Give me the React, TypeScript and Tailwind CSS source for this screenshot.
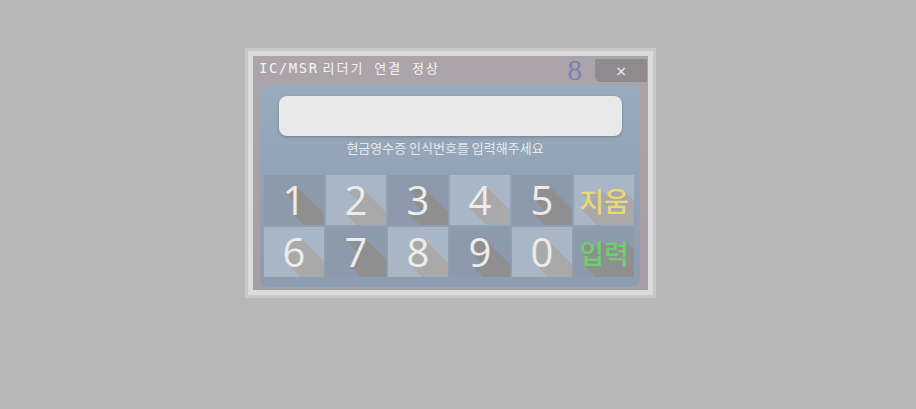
import React from "react";

const keys: { label: string; tone: "dark" | "light"; color: "white" | "yellow" | "green" }[] = [
  { label: "1", tone: "dark", color: "white" },
  { label: "2", tone: "light", color: "white" },
  { label: "3", tone: "dark", color: "white" },
  { label: "4", tone: "light", color: "white" },
  { label: "5", tone: "dark", color: "white" },
  { label: "지움", tone: "light", color: "yellow" },
  { label: "6", tone: "light", color: "white" },
  { label: "7", tone: "dark", color: "white" },
  { label: "8", tone: "light", color: "white" },
  { label: "9", tone: "dark", color: "white" },
  { label: "0", tone: "light", color: "white" },
  { label: "입력", tone: "dark", color: "green" },
];

const darkShadow =
  "[text-shadow:1px_1px_0_#8f8f8f,2px_2px_0_#8f8f8f,3px_3px_0_#8f8f8f,4px_4px_0_#8f8f8f,5px_5px_0_#8f8f8f,6px_6px_0_#8f8f8f,7px_7px_0_#8f8f8f,8px_8px_0_#8f8f8f,9px_9px_0_#8f8f8f,10px_10px_0_#8f8f8f,11px_11px_0_#8f8f8f,12px_12px_0_#8f8f8f,13px_13px_0_#8f8f8f,14px_14px_0_#8f8f8f,15px_15px_0_#8f8f8f,16px_16px_0_#8f8f8f,17px_17px_0_#8f8f8f,18px_18px_0_#8f8f8f,19px_19px_0_#8f8f8f,20px_20px_0_#8f8f8f,21px_21px_0_#8f8f8f,22px_22px_0_#8f8f8f,23px_23px_0_#8f8f8f,24px_24px_0_#8f8f8f,25px_25px_0_#8f8f8f,26px_26px_0_#8f8f8f,27px_27px_0_#8f8f8f,28px_28px_0_#8f8f8f,29px_29px_0_#8f8f8f,30px_30px_0_#8f8f8f,31px_31px_0_#8f8f8f,32px_32px_0_#8f8f8f,33px_33px_0_#8f8f8f,34px_34px_0_#8f8f8f,35px_35px_0_#8f8f8f,36px_36px_0_#8f8f8f,37px_37px_0_#8f8f8f,38px_38px_0_#8f8f8f,39px_39px_0_#8f8f8f,40px_40px_0_#8f8f8f]";
const lightShadow =
  "[text-shadow:1px_1px_0_#a9a9a9,2px_2px_0_#a9a9a9,3px_3px_0_#a9a9a9,4px_4px_0_#a9a9a9,5px_5px_0_#a9a9a9,6px_6px_0_#a9a9a9,7px_7px_0_#a9a9a9,8px_8px_0_#a9a9a9,9px_9px_0_#a9a9a9,10px_10px_0_#a9a9a9,11px_11px_0_#a9a9a9,12px_12px_0_#a9a9a9,13px_13px_0_#a9a9a9,14px_14px_0_#a9a9a9,15px_15px_0_#a9a9a9,16px_16px_0_#a9a9a9,17px_17px_0_#a9a9a9,18px_18px_0_#a9a9a9,19px_19px_0_#a9a9a9,20px_20px_0_#a9a9a9,21px_21px_0_#a9a9a9,22px_22px_0_#a9a9a9,23px_23px_0_#a9a9a9,24px_24px_0_#a9a9a9,25px_25px_0_#a9a9a9,26px_26px_0_#a9a9a9,27px_27px_0_#a9a9a9,28px_28px_0_#a9a9a9,29px_29px_0_#a9a9a9,30px_30px_0_#a9a9a9,31px_31px_0_#a9a9a9,32px_32px_0_#a9a9a9,33px_33px_0_#a9a9a9,34px_34px_0_#a9a9a9,35px_35px_0_#a9a9a9,36px_36px_0_#a9a9a9,37px_37px_0_#a9a9a9,38px_38px_0_#a9a9a9,39px_39px_0_#a9a9a9,40px_40px_0_#a9a9a9]";

function Key({ k }: { k: (typeof keys)[number] }) {
  const bg = k.tone === "dark" ? "bg-[#8d9aab]" : "bg-[#a9b6c6]";
  const shadow = k.tone === "dark" ? darkShadow : lightShadow;
  const isWord = k.label.length > 1;
  const color =
    k.color === "yellow" ? "text-[#e8d877]" : k.color === "green" ? "text-[#6fcf6f]" : "text-[#ececec]";
  return (
    <div className={`${bg} h-[50px] overflow-hidden flex items-center justify-center`}>
      <span
        className={`${color} ${shadow} ${
          isWord
            ? "text-[27px] font-medium font-['Noto_Sans_CJK_KR',sans-serif] leading-none"
            : "text-[40px] font-['Open_Sans',sans-serif] leading-none"
        }`}
      >
        {k.label}
      </span>
    </div>
  );
}

export default function App() {
  return (
    <div className="w-[916px] h-[409px] bg-[#b8b8b8] pt-[48px] pl-[245px]">
      <div className="w-[411px] h-[250px] border-[3px] border-[#c9c9c9] bg-[#dcdcdc] p-[5px]">
        <div className="w-full h-full bg-gradient-to-b from-[#aba4a9] to-[#a59ea4] flex flex-col">
          <div className="h-[26px] flex items-start">
            <div className="pl-[6px] pt-[4px] leading-[16px] text-[#f4f4f4] flex items-baseline">
              <span className="text-[14px] tracking-[1.5px] font-['DejaVu_Sans_Mono',monospace]">IC/MSR</span>
              <span className="text-[13px] tracking-[2px] font-['Noto_Sans_CJK_KR',sans-serif] ml-[4px]">
                리더기&nbsp;&nbsp;연결&nbsp;&nbsp;정상
              </span>
            </div>
            <div className="ml-auto pt-[1px] pr-[13px] text-[29px] leading-[26px] text-[#7b7dba] font-['Liberation_Serif',serif]">
              8
            </div>
            <div className="mt-[3px] mr-[1px] w-[52px] h-[23px] bg-[#8f8b8f] rounded-bl-[6px] flex items-center justify-center text-[#f2f2f2] text-[14px] leading-none font-['DejaVu_Sans',sans-serif]">
              ×
            </div>
          </div>
          <div className="mt-[3px] ml-[7px] w-[380px] h-[202px] rounded-[8px] bg-gradient-to-b from-[#9aaabd] to-[#8c9cb1] pt-[11px] flex flex-col">
            <div className="ml-[19px] w-[343px] h-[40px] rounded-[8px] bg-[#e9e9e9] shadow-[0_1px_3px_rgba(0,0,0,0.25)]" />
            <div className="mt-[3px] h-[18px] leading-[18px] text-center text-[13px] text-[#e6e9ee] font-['Noto_Sans_CJK_KR',sans-serif] pr-[10px]">
              현금영수증 인식번호를 입력해주세요
            </div>
            <div className="mt-[18px] ml-[4px] grid grid-cols-[repeat(6,60px)] gap-[2px]">
              {keys.map((k) => (
                <Key key={k.label} k={k} />
              ))}
            </div>
          </div>
        </div>
      </div>
    </div>
  );
}
